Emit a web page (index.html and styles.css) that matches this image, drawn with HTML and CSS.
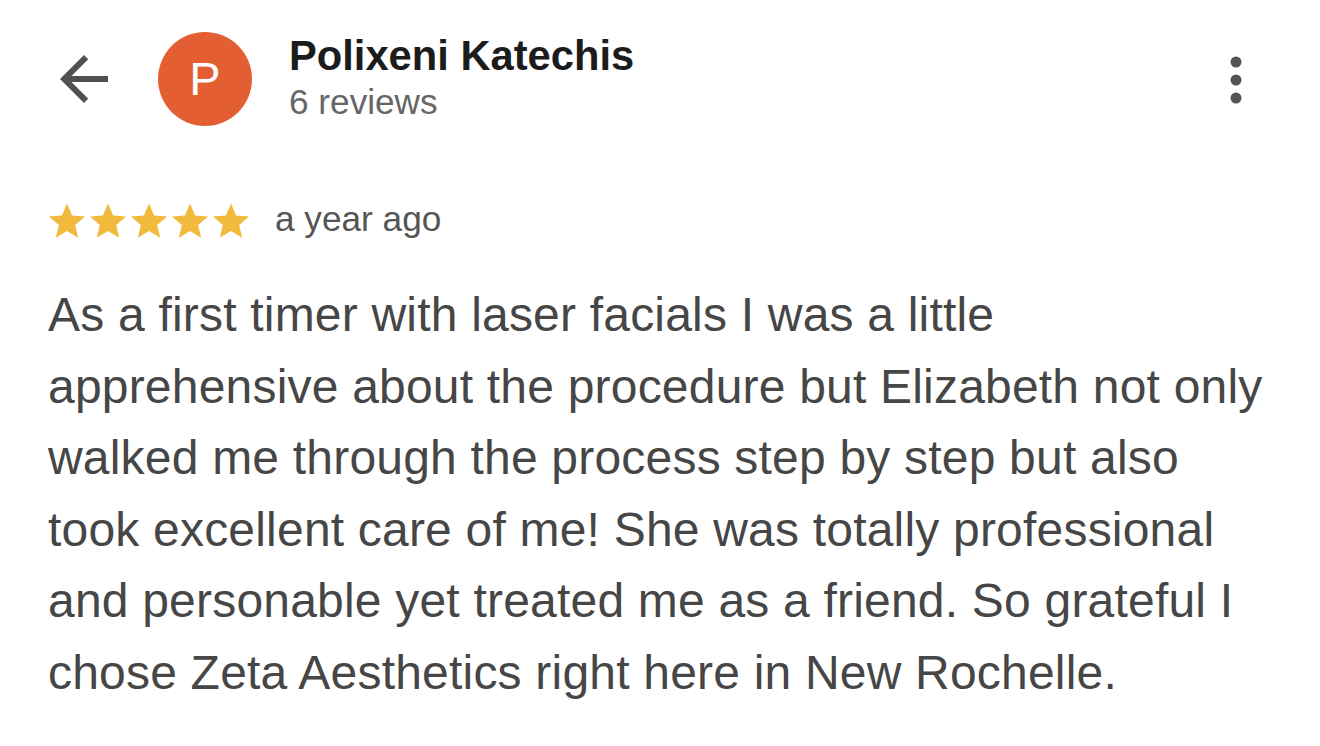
FILE: index.html
```html
<!DOCTYPE html>
<html>
<head>
<meta charset="utf-8">
<link rel="stylesheet" href="styles.css">
</head>
<body>
<div class="page">
  <header class="header">
    <svg class="back" viewBox="0 0 24 24" width="72" height="72"><path d="M20 11H7.83l5.59-5.59L12 4l-8 8 8 8 1.41-1.41L7.83 13H20v-2z" fill="#505050"/></svg>
    <div class="avatar">P</div>
    <div class="who">
      <div class="name">Polixeni Katechis</div>
      <div class="count">6 reviews</div>
    </div>
    <svg class="more" viewBox="0 0 12 48" width="12" height="48"><circle cx="6" cy="6" r="5.5" fill="#555"/><circle cx="6" cy="24" r="5.5" fill="#555"/><circle cx="6" cy="42" r="5.5" fill="#555"/></svg>
  </header>
  <div class="meta">
    <div class="stars">
      <svg viewBox="0 0 24 24" width="40" height="40"><path d="M12 1.5l3.05 7.2 7.8.65-5.95 5.1 1.8 7.6L12 18l-6.7 4.05 1.8-7.6-5.95-5.1 7.8-.65z" fill="#F2BA3D"/></svg>
      <svg viewBox="0 0 24 24" width="40" height="40"><path d="M12 1.5l3.05 7.2 7.8.65-5.95 5.1 1.8 7.6L12 18l-6.7 4.05 1.8-7.6-5.950-5.1 7.8-.65z" fill="#F2BA3D"/></svg>
      <svg viewBox="0 0 24 24" width="40" height="40"><path d="M12 1.5l3.05 7.2 7.8.65-5.95 5.1 1.8 7.6L12 18l-6.7 4.05 1.8-7.6-5.95-5.1 7.8-.65z" fill="#F2BA3D"/></svg>
      <svg viewBox="0 0 24 24" width="40" height="40"><path d="M12 1.5l3.05 7.2 7.8.65-5.95 5.1 1.8 7.6L12 18l-6.7 4.05 1.8-7.6-5.95-5.1 7.8-.65z" fill="#F2BA3D"/></svg>
      <svg viewBox="0 0 24 24" width="40" height="40"><path d="M12 1.5l3.05 7.2 7.8.65-5.95 5.1 1.8 7.6L12 18l-6.7 4.05 1.8-7.6-5.95-5.1 7.8-.65z" fill="#F2BA3D"/></svg>
    </div>
    <span class="when">a year ago</span>
  </div>
  <p class="text">As a first timer with laser facials I was a little<br>apprehensive about the procedure but Elizabeth not only<br>walked me through the process step by step but also<br>took excellent care of me! She was totally professional<br>and personable yet treated me as a friend. So grateful I<br>chose Zeta Aesthetics right here in New Rochelle.</p>
</div>
</body>
</html>
```
FILE: styles.css
```css
html, body {
  margin: 0;
  background: #ffffff;
}
.page {
  width: 1320px;
  height: 746px;
  overflow: hidden;
  font-family: "Liberation Sans", Arial, sans-serif;
  padding: 32px 0 0 48px;
  box-sizing: border-box;
}
.header {
  display: flex;
  align-items: flex-start;
}
.back {
  flex: none;
  margin-top: 11px;
}
.avatar {
  flex: none;
  width: 94px;
  height: 94px;
  border-radius: 50%;
  background: #E35E33;
  color: #ffffff;
  font-size: 47px;
  line-height: 94px;
  text-align: center;
  margin-left: 38px;
}
.who {
  margin-left: 37px;
  margin-top: 1px;
  display: flex;
  flex-direction: column;
}
.name {
  font-size: 41.7px;
  font-weight: bold;
  color: #1c1c1c;
  line-height: 46px;
}
.count {
  font-size: 35.2px;
  color: #666666;
  line-height: 40px;
  margin-top: 3px;
}
.more {
  flex: none;
  margin-left: auto;
  margin-right: 78px;
  margin-top: 24px;
}
.meta {
  display: flex;
  align-items: center;
  height: 40px;
  margin-top: 75px;
}
.stars {
  display: flex;
  gap: 1px;
  margin-left: -1px;
}
.when {
  font-size: 35.2px;
  line-height: 40px;
  color: #555555;
  margin-left: 24px;
  margin-bottom: 5px;
}
.text {
  margin: 38px 0 0 0;
  font-size: 48px;
  line-height: 71.6px;
  letter-spacing: 0.2px;
  color: #464646;
}
```
